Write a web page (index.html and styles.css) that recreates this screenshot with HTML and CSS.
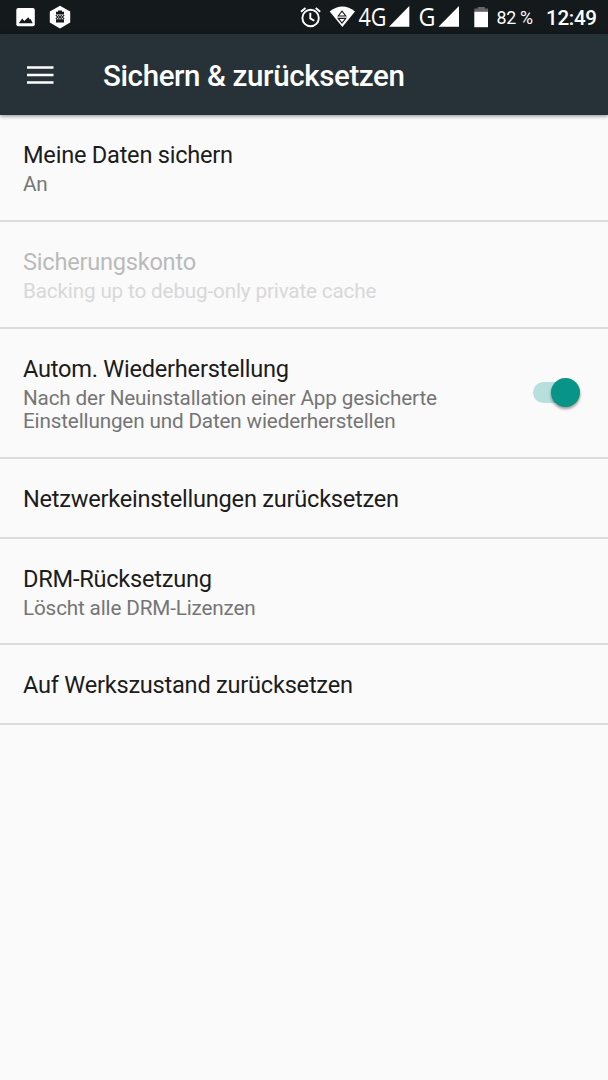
FILE: index.html
```html
<!DOCTYPE html>
<html lang="de">
<head>
    <meta charset="UTF-8">
    <meta name="viewport" content="width=device-width, initial-scale=1.0">
    <title>Sichern &amp; zurücksetzen</title>
    <link rel="stylesheet" href="styles.css">
</head>
<body>
    <div class="statusbar">
        <svg class="notif" width="80" height="34" viewBox="0 0 80 34">
            <!-- picture -->
            <rect x="16.3" y="8" width="18.5" height="18.3" rx="2" fill="#fff"/>
            <path d="M18.8 23.3L22.2 18.6L24.3 21L28.3 17.2L29.8 19.6L30.6 19L32.7 23.3Z" fill="#14191c"/>
            <!-- hexagon -->
            <path d="M60 5.8L70.2 11.4V22.6L60 28.4L49.8 22.6V11.4Z" fill="#fff"/>
            <path d="M58 10.5H62V11.7H64V14.6H56V11.7H58ZM56 19.3H64V22.6H56Z" fill="#14191c"/>
            <path d="M55.8 15.2L58 17L55.8 18.8M64.2 15.2L62 17L64.2 18.8M58.2 15.2L60 16.7L61.8 15.2M58.2 18.8L60 17.3L61.8 18.8" fill="none" stroke="#14191c" stroke-width="1.1"/>
        </svg>
        <svg class="signals" width="200" height="34" viewBox="294 0 200 34">
            <!-- alarm -->
            <g fill="none" stroke="#fff" stroke-width="1.9">
                <circle cx="310.6" cy="18" r="8.2"/>
                <path d="M310.3 12.8V18.4L314.3 20.8M301 11.7L305.5 7.9M320.2 11.7L315.7 7.9"/>
            </g>
            <!-- wifi -->
            <path d="M329.7 11.5Q342.5 1.5 355 11.5L342.4 27Z" fill="#fff"/>
            <path d="M338.2 16L342 11.2L345.8 16ZM338.2 18.4L342 23.2L345.8 18.4Z" fill="none" stroke="#14191c" stroke-width="1.1"/>
            <text class="net" x="358.5" y="26.4" textLength="28" lengthAdjust="spacingAndGlyphs">4G</text>
            <path d="M409.3 6V26.7H389Z" fill="#fff"/>
            <text class="net" x="418.5" y="26.4" textLength="17" lengthAdjust="spacingAndGlyphs">G</text>
            <path d="M459 6V26.7H438.5Z" fill="#fff"/>
            <!-- battery -->
            <path d="M477.8 7H484.8V8.6H488V12H474.3V8.6H477.8Z" fill="#646769"/>
            <path d="M474.3 11.8H488V27.2H474.3Z" fill="#fff"/>
        </svg>
        <span class="percent">82 %</span>
        <span class="clock">12:49</span>
    </div>
    <div class="appbar">
        <svg class="menu" width="27" height="18" viewBox="0 0 27 18">
            <path d="M0 1.5H26.5M0 9H26.5M0 16.5H26.5" stroke="#fff" stroke-width="2.6"/>
        </svg>
        <h1>Sichern &amp; zurücksetzen</h1>
    </div>
    <div class="list">
        <div class="item">
            <div class="text">
                <h2>Meine Daten sichern</h2>
                <p>An</p>
            </div>
        </div>
        <div class="item disabled">
            <div class="text">
                <h2>Sicherungskonto</h2>
                <p>Backing up to debug-only private cache</p>
            </div>
        </div>
        <div class="item">
            <div class="text">
                <h2>Autom. Wiederherstellung</h2>
                <p>Nach der Neuinstallation einer App gesicherte<br>Einstellungen und Daten wiederherstellen</p>
            </div>
            <div class="switch"><div class="thumb"></div></div>
        </div>
        <div class="item single">
            <div class="text">
                <h2>Netzwerkeinstellungen zurücksetzen</h2>
            </div>
        </div>
        <div class="item">
            <div class="text">
                <h2>DRM-Rücksetzung</h2>
                <p>Löscht alle DRM-Lizenzen</p>
            </div>
        </div>
        <div class="item single">
            <div class="text">
                <h2>Auf Werkszustand zurücksetzen</h2>
            </div>
        </div>
    </div>
</body>
</html>
```
FILE: styles.css
```css
* {
    box-sizing: border-box;
    margin: 0;
    padding: 0;
}
body {
    background: #fafafa;
    font-family: Roboto, "Liberation Sans", sans-serif;
    min-height: 1080px;
}
.statusbar {
    display: flex;
    align-items: center;
    height: 34px;
    padding-right: 11px;
    background: #14191c;
    color: #fff;
}
.signals {
    margin-left: auto;
    overflow: visible;
}
.net {
    font-family: "Open Sans", "Noto Sans", sans-serif;
    font-size: 25.5px;
    fill: #fff;
}
.percent {
    width: 50px;
    padding-left: 2.5px;
    font-size: 17.8px;
    letter-spacing: -0.3px;
    white-space: nowrap;
}
.clock {
    width: 53px;
    padding-left: 2px;
    margin-top: 2px;
    font-size: 20.6px;
    font-weight: 500;
    letter-spacing: -0.3px;
}
.appbar {
    display: flex;
    align-items: center;
    height: 81px;
    padding-left: 27px;
    background: #263238;
    color: #fff;
    box-shadow: 0 1px 4px rgba(0, 0, 0, 0.45);
}
.appbar h1 {
    margin-left: 49px;
    padding-top: 2px;
    font-size: 29.5px;
    font-weight: 500;
    letter-spacing: -0.38px;
}
.item {
    display: flex;
    align-items: center;
    justify-content: space-between;
    height: 106.75px;
    padding: 0 28px 0 23px;
    border-bottom: 2px solid #dcdcdc;
}
.item:nth-child(3) {
    height: 130.5px;
}
.single {
    height: 79.5px;
}
.text {
    padding-top: 3px;
}
.item h2 {
    color: #1c1c1c;
    font-size: 23.6px;
    font-weight: 400;
    line-height: 27px;
    letter-spacing: -0.24px;
}
.item p {
    margin-top: 4px;
    color: #757575;
    font-size: 20.7px;
    line-height: 23.7px;
    letter-spacing: -0.16px;
}
.item:nth-child(2) .text,
.item:nth-child(3) .text,
.item:nth-child(5) .text {
    padding-top: 4.4px;
}
.item.disabled h2 {
    color: #bababa;
}
.item.disabled p {
    color: #d8d8d8;
}
.switch {
    display: flex;
    align-items: center;
    justify-content: flex-end;
    width: 47px;
    height: 21px;
    border-radius: 11px;
    background: #b7e0dc;
}
.thumb {
    width: 29px;
    height: 29px;
    flex-shrink: 0;
    border-radius: 50%;
    background: #089486;
    box-shadow: 0 2px 3px rgba(0, 0, 0, 0.4);
}
```
